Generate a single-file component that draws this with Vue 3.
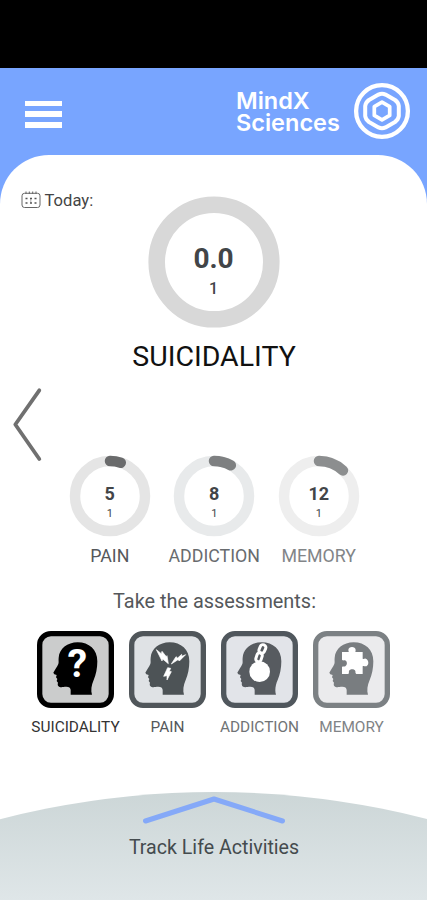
<script setup>
const scores = [
  { key: 'pain', label: 'PAIN', value: 5, count: 1 },
  { key: 'addiction', label: 'ADDICTION', value: 8, count: 1 },
  { key: 'memory', label: 'MEMORY', value: 12, count: 1 },
]

const assessments = [
  { key: 'suicidality', label: 'SUICIDALITY' },
  { key: 'pain', label: 'PAIN' },
  { key: 'addiction', label: 'ADDICTION' },
  { key: 'memory', label: 'MEMORY' },
]
</script>

<template>
  <div class="screen">
    <div class="status-bar"></div>

    <!-- Header -->
    <header class="header">
      <div class="menu">
        <span></span>
        <span></span>
        <span></span>
      </div>
      <div class="brand">
        <div class="brand-name">
          <div class="mind">MindX</div>
          <div class="sciences">Sciences</div>
        </div>
        <svg class="logo" viewBox="0 0 58 58" fill="none" stroke="#fff" stroke-linejoin="round">
          <circle cx="29" cy="29" r="25.9" stroke-width="4.3" />
          <path
            d="M25.5 12.6Q29 10.8 32.5 12.6L42 18Q45.3 20.3 45.8 24V34Q45.3 37.7 42 40L32.5 45.4Q29 47.2 25.5 45.4L16 40Q12.7 37.7 12.2 34V24Q12.7 20.3 16 18Z"
            stroke-width="4"
          />
          <path d="M29 20.2L36.7 24.6V33.4L29 37.8L21.3 33.4V24.6Z" stroke-width="3.7" />
        </svg>
      </div>
    </header>

    <main class="card">
      <div class="today">
        <svg class="calendar" viewBox="0 0 20 18" fill="none" stroke="#666">
          <rect x="1" y="2.3" width="18" height="14.2" rx="2.5" />
          <path d="M5 .5V3M8.3 .5V3M11.7 .5V3M15 .5V3" />
          <path d="M4.5 7.5H16M4.5 12H16" stroke="#555" stroke-width="1.4" stroke-dasharray="2 2.5" />
          <path d="M9.8 8.5V12" stroke-dasharray="1 1" />
        </svg>
        <span>Today:</span>
      </div>

      <!-- Main score -->
      <div class="ring big">
        <svg viewBox="0 0 132 132" fill="none">
          <circle cx="66" cy="66" r="57.3" stroke="#d8d8d8" stroke-width="16.6" />
        </svg>
        <div class="ring-text">
          <strong>0.0</strong>
          <span>1</span>
        </div>
      </div>
      <h1 class="title">SUICIDALITY</h1>

      <svg class="previous" viewBox="0 0 32 76" fill="none">
        <path
          d="M27.3 3.3L3.3 37.5L27.3 72"
          stroke="#707070"
          stroke-width="3.8"
          stroke-linecap="round"
          stroke-linejoin="round"
        />
      </svg>

      <!-- Other scores -->
      <div class="scores">
        <div v-for="score in scores" :key="score.key" class="score" :class="score.key">
          <div class="ring">
            <svg viewBox="0 0 82 82" fill="none" stroke-width="10.5">
              <circle class="track" cx="41" cy="41" r="35" />
              <circle
                class="arc"
                cx="41"
                cy="41"
                r="35"
                pathLength="100"
                stroke-linecap="round"
                :stroke-dasharray="`${score.value} 100`"
                transform="rotate(-90 41 41)"
              />
            </svg>
            <div class="ring-text">
              <strong>{{ score.value }}</strong>
              <span>{{ score.count }}</span>
            </div>
          </div>
          <div class="score-label">{{ score.label }}</div>
        </div>
      </div>

      <!-- Assessments -->
      <h2 class="subtitle">Take the assessments:</h2>
      <div class="assessments">
        <div v-for="item in assessments" :key="item.key" class="assessment" :class="item.key">
          <svg viewBox="0 0 231 231">
            <rect class="tile" x="8" y="8" width="215" height="215" rx="34" stroke-width="16" />
            <path
              class="head"
              d="M122 34C91 34 67 53 65 80C64 88 66 94 64 99C60 108 54 116 49 125Q50 130 59 132L57 139L61 144L59 150L63 155C60 165 66 170 79 168C92 165 101 168 101 177V191H165C161 179 163 163 170 147C177 131 181 112 181 91C181 56 156 34 122 34Z"
            />
            <text v-if="item.key === 'suicidality'" x="121" y="138" class="question">?</text>
            <g v-if="item.key === 'pain'" fill="#fff" stroke="#fff" stroke-width="2">
              <path d="M82 56L97 68L99 61L112 77L114 74L118 98L101 84L99 90Z" />
              <path d="M170 71L151 90L147 86L127 99L141 77L146 81L158 70L158 76Z" />
              <path d="M116 110L125 112L121 121L127 122L114 147L114 134L104 136Z" />
            </g>
            <g v-if="item.key === 'addiction'" fill="none" stroke="#fff">
              <rect x="116" y="41" width="17" height="26" rx="8" stroke-width="9" transform="rotate(24 125 53)" />
              <rect x="106" y="65" width="16" height="27" rx="8" stroke-width="9" transform="rotate(18 113 79)" />
              <circle cx="116" cy="122" r="31" fill="#fff" stroke="none" />
            </g>
            <path
              v-if="item.key === 'memory'"
              fill="#fff"
              d="M87 63H106C109 62 106 60 106 57C106 45 128 45 128 57C128 60 126 62 128 63H149V83C152 86 154 82 158 83C163 84 166 90 166 95C166 101 162 106 157 106C153 106 152 103 149 106V129H130C126 126 128 123 127 120C125 113 110 113 108 120C107 123 109 126 106 129H87V108C90 105 93 108 97 106C104 101 103 91 96 88C92 87 90 90 87 86Z"
            />
          </svg>
          <div class="assessment-label">{{ item.label }}</div>
        </div>
      </div>
    </main>

    <!-- Life activities drawer -->
    <footer class="activities">
      <svg class="up" viewBox="0 0 146 30" fill="none">
        <path
          d="M4.5 26L73 4L141.5 26"
          stroke="#85a9f8"
          stroke-width="5"
          stroke-linecap="round"
          stroke-linejoin="round"
        />
      </svg>
      <div class="activities-label">Track Life Activities</div>
    </footer>
  </div>
</template>

<style>
body {
  margin: 0;
}
</style>

<style scoped>
.screen {
  display: flex;
  flex-direction: column;
  width: 427px;
  height: 900px;
  overflow: hidden;
  background: #fff;
  color: #424548;
  font-family: Roboto, 'Liberation Sans', sans-serif;
}

svg {
  display: block;
}

.status-bar {
  flex: none;
  height: 68px;
  background: #000;
}

.header {
  display: flex;
  flex: none;
  justify-content: space-between;
  box-sizing: border-box;
  height: 136px;
  padding: 14px 16px 0 25px;
  background: #78a5ff;
}

.menu {
  display: flex;
  flex-direction: column;
  gap: 5.3px;
  padding-top: 18.5px;
}

.menu span {
  width: 37px;
  height: 5.5px;
  background: #fff;
}

.brand {
  display: flex;
  gap: 13px;
}

.brand-name {
  width: 104px;
  padding-top: 8px;
  color: #fff;
  font-family: Inter, sans-serif;
  font-size: 23.5px;
  font-weight: 600;
  line-height: 21.5px;
  white-space: nowrap;
}

.logo {
  width: 58px;
  height: 58px;
}

.card {
  display: flex;
  flex: none;
  flex-direction: column;
  height: 637.5px;
  margin-top: -49.5px;
  border-radius: 49px 49px 0 0;
  background: #fff;
}

.today {
  display: flex;
  align-items: center;
  gap: 3.5px;
  height: 20px;
  margin: 35.5px 0 0 21px;
  color: #444;
  font-size: 16.6px;
}

.calendar {
  width: 20px;
  height: 18px;
}

.ring {
  display: grid;
  width: 82px;
  height: 82px;
}

.ring > * {
  grid-area: 1 / 1;
}

.ring-text {
  display: flex;
  flex-direction: column;
  align-items: center;
}

.ring-text strong {
  margin-top: 28px;
  font-size: 18px;
  font-weight: 700;
  line-height: 22px;
}

.ring-text span {
  margin-top: 2px;
  font-size: 11px;
  line-height: 14px;
}

.ring.big {
  width: 132px;
  height: 132px;
  margin: -14px 0 0 147.5px;
}

.big .ring-text strong {
  margin-top: 46px;
  font-size: 28px;
  line-height: 34px;
}

.big .ring-text span {
  margin-top: 3px;
  font-size: 16px;
  font-weight: 500;
  line-height: 20px;
}

.title {
  margin: 12px 0 0 1px;
  color: #111;
  font-size: 28.5px;
  font-weight: 400;
  line-height: 34px;
  text-align: center;
}

.previous {
  width: 32px;
  height: 76px;
  margin: 13px 0 0 12px;
}

.scores {
  display: grid;
  grid-template-columns: repeat(3, 104.5px);
  height: 115px;
  margin: -8px 0 0 57.5px;
}

.score {
  display: flex;
  flex-direction: column;
  align-items: center;
}

.score-label {
  margin-top: 8px;
  font-size: 17.8px;
  line-height: 22px;
}

.score .track {
  stroke: #e5e5e5;
}

.score .arc {
  stroke: #6a6b6c;
}

.score.addiction .track {
  stroke: #e8eaeb;
}

.score.addiction .arc {
  stroke: #7e8081;
}

.score.memory .track {
  stroke: #eeeeee;
}

.score.memory .arc {
  stroke: #8c8e8f;
}

.score.pain .score-label {
  color: #55585b;
}

.score.addiction .score-label {
  color: #686b6e;
}

.score.memory .score-label {
  color: #828588;
}

.subtitle {
  margin: 20px 0 0 2px;
  color: #55585b;
  font-size: 19.9px;
  font-weight: 400;
  line-height: 24px;
  text-align: center;
}

.assessments {
  display: grid;
  grid-template-columns: repeat(4, 92px);
  margin: 17px 0 0 29.5px;
}

.assessment {
  display: flex;
  flex-direction: column;
  align-items: center;
}

.assessment svg {
  width: 77px;
  height: 77px;
}

.assessment-label {
  margin-top: 8.5px;
  color: #55585b;
  font-size: 15.4px;
  line-height: 20px;
  white-space: nowrap;
}

.tile {
  fill: #cbcccc;
  stroke: #000;
}

.question {
  fill: #fff;
  font-size: 118px;
  font-weight: 700;
  text-anchor: middle;
}

.assessment.suicidality .assessment-label {
  color: #333;
}

.assessment.pain .tile {
  fill: #dfe2e5;
  stroke: #50565a;
}

.assessment.pain .head {
  fill: #4d5356;
}

.assessment.addiction .tile {
  fill: #e2e4e9;
  stroke: #50575d;
}

.assessment.addiction .head {
  fill: #575b60;
}

.assessment.addiction .assessment-label {
  color: #707375;
}

.assessment.memory .tile {
  fill: #ebebed;
  stroke: #7c8184;
}

.assessment.memory .head {
  fill: #797d80;
}

.assessment.memory .assessment-label {
  color: #808386;
}

.activities {
  display: flex;
  flex-direction: column;
  align-items: center;
  align-self: center;
  flex: none;
  width: 1714px;
  height: 1714px;
  border-radius: 50%;
  background: linear-gradient(#ccd6d7, #dfe6e8 108px);
}

.up {
  width: 146px;
  height: 30px;
  margin-top: 2.5px;
}

.activities-label {
  margin: 11.5px 0 0 1px;
  color: #444b4e;
  font-size: 19.6px;
  line-height: 24px;
}
</style>
